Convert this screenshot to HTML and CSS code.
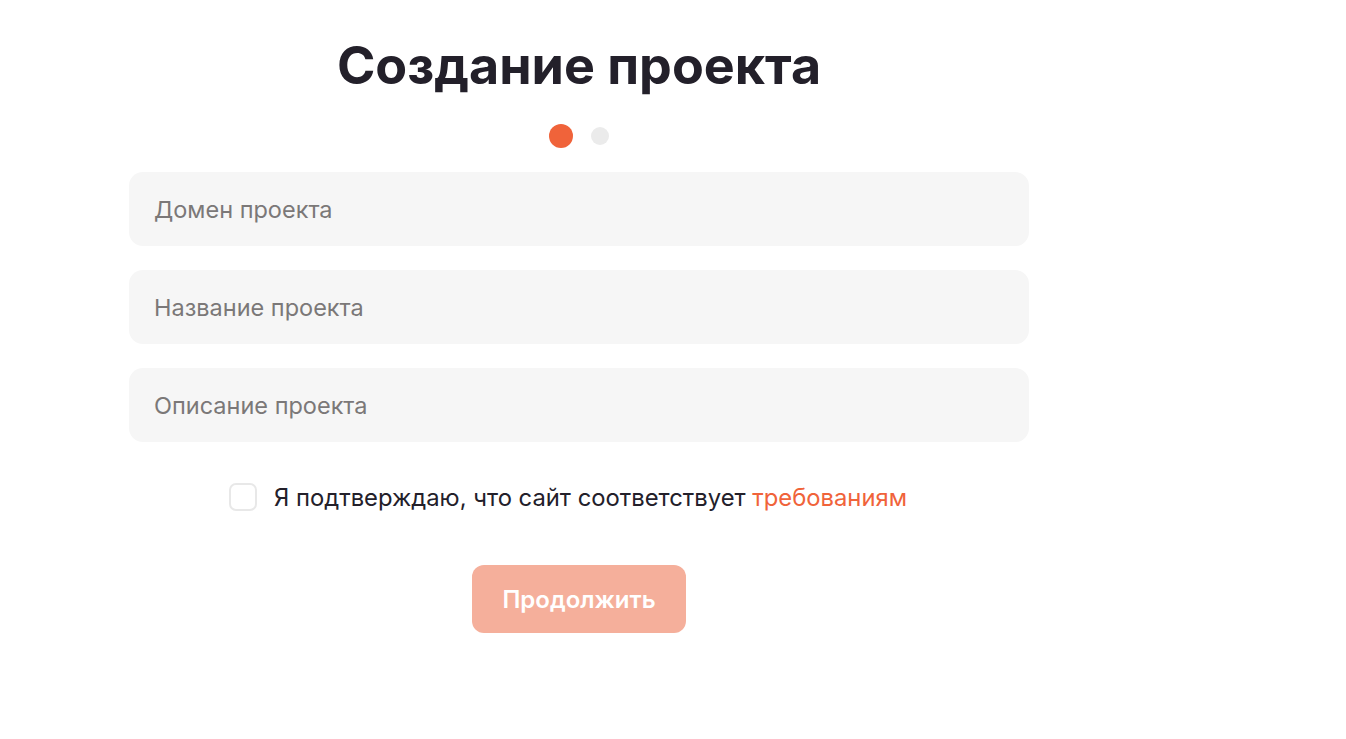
FILE: index.html
```html
<!DOCTYPE html>
<html lang="ru">
<head>
  <meta charset="UTF-8">
  <title>Создание проекта</title>
  <link rel="stylesheet" href="styles.css">
</head>
<body>

  <div class="project-form">
    <h1>Создание проекта</h1>
    <div class="steps">
      <span class="step active"></span>
      <span class="step"></span>
    </div>
    <form id="form-project">
      <input type="text" id="domain" name="domain" placeholder="Домен проекта">
      <input type="text" id="name" name="name" placeholder="Название проекта">
      <input type="text" id="description" name="description" placeholder="Описание проекта">

      <label class="agree">
        <input type="checkbox" id="agree" name="agree">
        <span class="box"></span>
        <span>Я подтверждаю, что сайт соответствует <a href="#">требованиям</a></span>
      </label>

      <button type="submit" disabled>Продолжить</button>
    </form>
  </div>

</body>
</html>
```

FILE: styles.css
```css
* {
  box-sizing: border-box;
}

body {
  margin: 0;
  padding: 0;
  font-family: Inter, 'Noto Sans', sans-serif;
  background-color: #ffffff;
}

.project-form {
  width: 900px;
  margin-left: 129px;
  padding-top: 35px;
}

.project-form h1 {
  margin: 0;
  font-size: 52px;
  font-weight: 700;
  line-height: 62px;
  color: #23202a;
  text-align: center;
}

.steps {
  display: flex;
  justify-content: center;
  align-items: center;
  gap: 18px;
  height: 24px;
  margin: 27px 0 24px;
}

.step {
  width: 18px;
  height: 18px;
  border-radius: 50%;
  background-color: #ebebeb;
}

.step.active {
  width: 24px;
  height: 24px;
  background-color: #f0633a;
}

form {
  display: flex;
  flex-direction: column;
}

input[type="text"] {
  width: 100%;
  height: 74px;
  padding: 0 25px;
  margin-bottom: 24px;
  border: none;
  border-radius: 14px;
  background-color: #f6f6f6;
  font-family: inherit;
  font-size: 23.5px;
  color: #23202a;
  outline: none;
}

input[type="text"]::placeholder {
  color: #7b7878;
}

.agree {
  display: flex;
  align-items: center;
  justify-content: center;
  gap: 17px;
  height: 28px;
  margin-top: 17px;
  padding-right: 22px;
  font-size: 23.8px;
  color: #23202a;
  cursor: pointer;
}

.agree input {
  display: none;
}

.agree .box {
  width: 28px;
  height: 28px;
  border: 2px solid #e8e8e8;
  border-radius: 7px;
  flex-shrink: 0;
}

.agree a {
  color: #f0633a;
  text-decoration: none;
}

button {
  align-self: center;
  width: 214px;
  height: 68px;
  margin-top: 54px;
  border: none;
  border-radius: 12px;
  background-color: #f5af9b;
  color: #ffffff;
  font-family: inherit;
  font-size: 24px;
  font-weight: 600;
  cursor: pointer;
}
```
